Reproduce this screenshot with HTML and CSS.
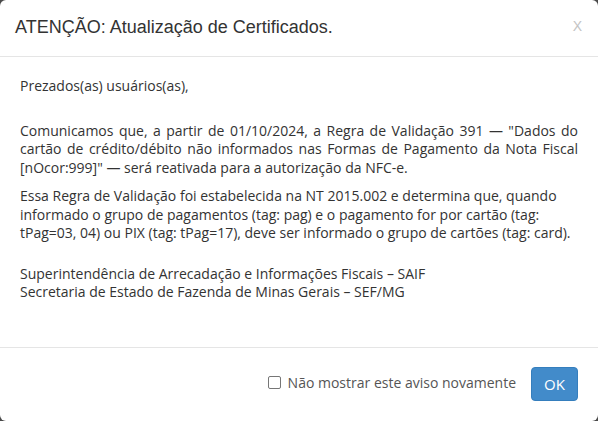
FILE: index.html
```html
<!DOCTYPE html>
<html lang="pt-BR">
<head>
<meta charset="utf-8">
<title>ATENÇÃO</title>
<link rel="stylesheet" href="styles.css">
</head>
<body>
<div class="modal">
  <div class="modal-header">
    <h4 class="modal-title">ATENÇÃO: Atualização de Certificados.</h4>
    <span class="close">X</span>
  </div>
  <div class="modal-body">
    <p class="greet">Prezados(as) usuários(as),</p>
    <p class="justify">Comunicamos que, a partir de 01/10/2024, a Regra de Validação 391 — "Dados do cartão de crédito/débito não informados nas Formas de Pagamento da Nota Fiscal [nOcor:999]" — será reativada para a autorização da NFC-e.</p>
    <p>Essa Regra de Validação foi estabelecida na NT 2015.002 e determina que, quando informado o grupo de pagamentos (tag: pag) e o pagamento for por cartão (tag: tPag=03, 04) ou PIX (tag: tPag=17), deve ser informado o grupo de cartões (tag: card).</p>
    <p class="sign">Superintendência de Arrecadação e Informações Fiscais – SAIF<br>Secretaria de Estado de Fazenda de Minas Gerais – SEF/MG</p>
  </div>
  <div class="modal-footer">
    <label class="check"><span class="box"></span>Não mostrar este aviso novamente</label>
    <span class="btn">OK</span>
  </div>
</div>
</body>
</html>
```
FILE: styles.css
```css
html, body {
  margin: 0;
  padding: 0;
  height: 100%;
}
body {
  background: #4a4a4a;
}
.modal {
  height: 421px;
  box-sizing: border-box;
  background: #fff;
  border-radius: 6px;
  display: flex;
  flex-direction: column;
}
.modal-header {
  height: 56px;
  border-bottom: 1px solid #e5e5e5;
  display: flex;
  align-items: center;
  justify-content: space-between;
  padding: 0 16px 0 15px;
}
.modal-title {
  margin: 0;
  font-family: "Liberation Sans", Arial, sans-serif;
  font-weight: normal;
  font-size: 18px;
  color: #333;
  padding-bottom: 1px;
}
.close {
  font-family: "Liberation Sans", Arial, sans-serif;
  font-size: 14px;
  color: #c4c4c4;
  padding-bottom: 4px;
}
.modal-body {
  flex: 1;
  padding: 20px 20px 0 20px;
  font-family: "Open Sans", sans-serif;
  font-size: 14px;
  line-height: 18.5px;
  color: #333;
}
.modal-body p {
  margin: 0 0 10px;
}
.modal-body .greet {
  margin-bottom: 26px;
}
.modal-body .justify {
  text-align: justify;
}
.modal-body .sign {
  margin-top: 22px;
}
.modal-footer {
  border-top: 1px solid #e5e5e5;
  padding: 19px 20px 20px;
  display: flex;
  justify-content: flex-end;
  align-items: center;
  gap: 15px;
}
.check {
  display: flex;
  align-items: center;
  font-family: "Open Sans", sans-serif;
  font-size: 14px;
  color: #555;
  padding-bottom: 3px;
}
.box {
  width: 11px;
  height: 11px;
  border: 1px solid #767676;
  border-radius: 2px;
  margin-right: 7px;
}
.btn {
  width: 47px;
  height: 34px;
  box-sizing: border-box;
  border-radius: 4px;
  background: #428bca;
  border: 1px solid #357ebd;
  color: #fff;
  font-family: "Open Sans", sans-serif;
  font-size: 15px;
  display: flex;
  align-items: center;
  justify-content: center;
}
```
